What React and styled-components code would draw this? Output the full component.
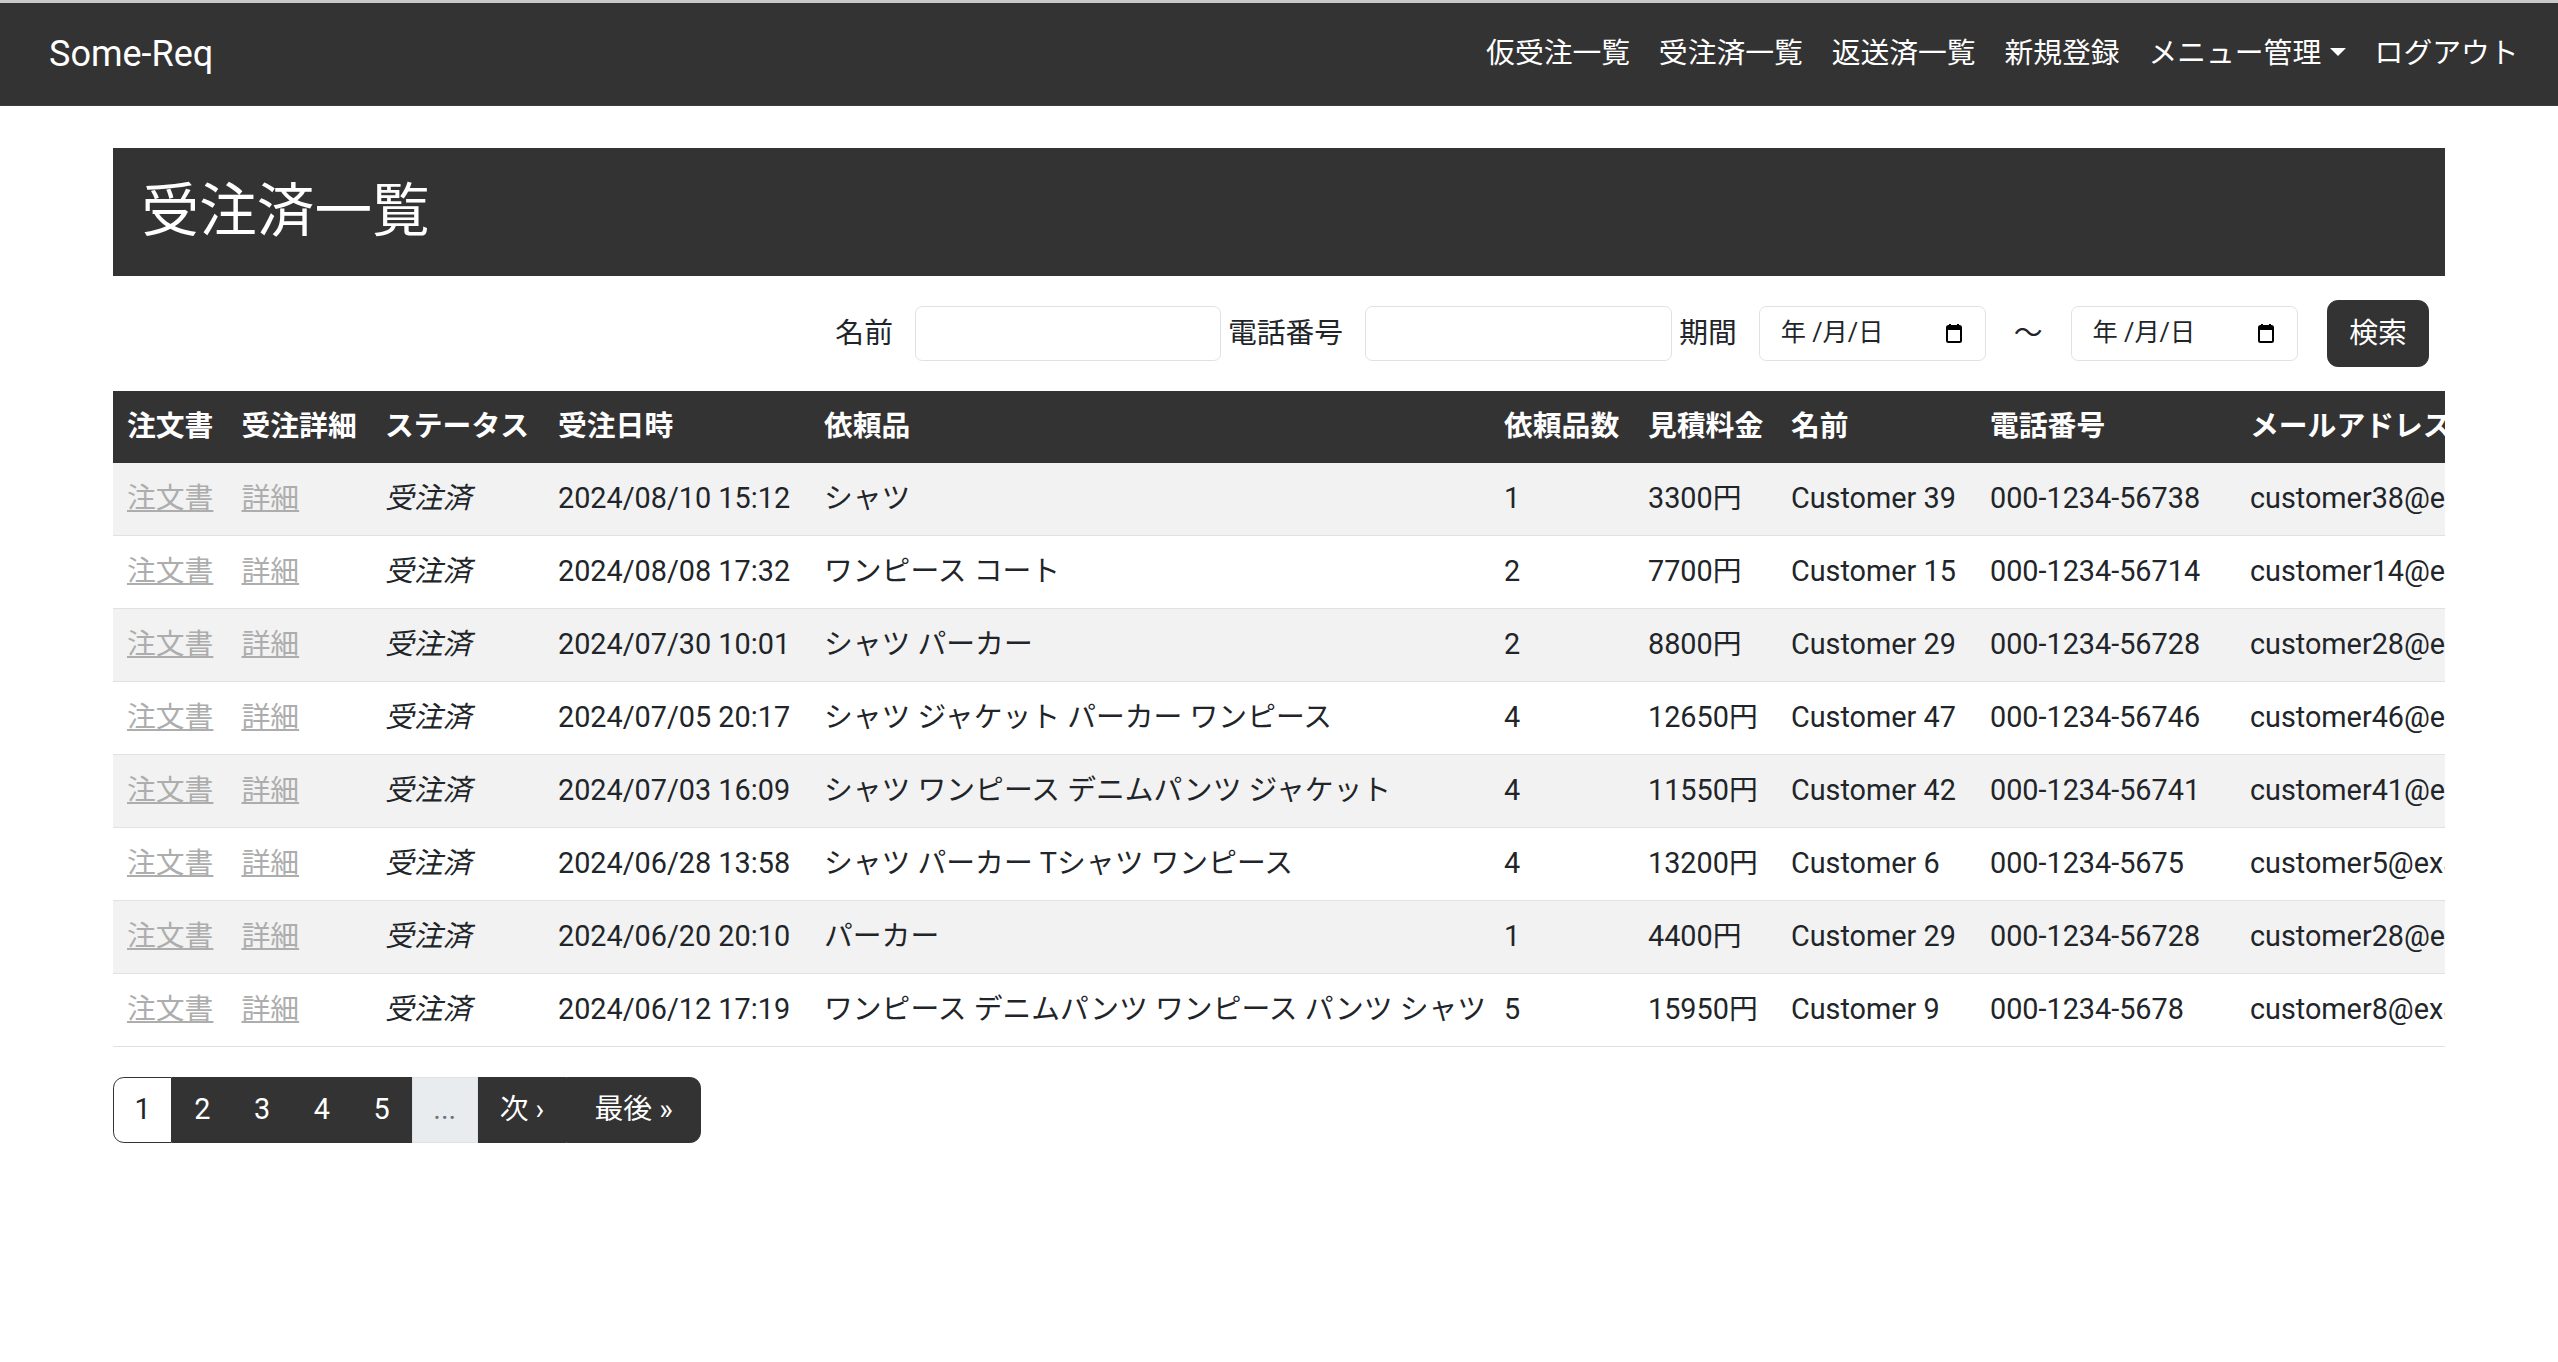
import React from 'react'
import styled, { createGlobalStyle, css } from 'styled-components'

const GlobalStyle = createGlobalStyle`
  body {
    margin: 0;
    background: #fff;
    color: #212529;
    font-family: Roboto, "Noto Sans CJK JP", sans-serif;
    font-size: 28.8px;
    line-height: 1.5;
  }
`

const Navbar = styled.nav`
  display: flex;
  align-items: center;
  justify-content: space-between;
  height: 102px;
  padding: 0 25px 0 49px;
  background: #333;
  border-top: 3px solid #c9c9c9;
  border-bottom: 1px solid #3d3d3d;
`

const Brand = styled.a`
  color: #fff;
  font-size: 36px;
  text-decoration: none;
`

const NavList = styled.ul`
  display: flex;
  margin: 0;
  padding: 0;
  list-style: none;
`

const NavLink = styled.li`
  padding: 0 14.4px;
  color: #fff;
  font-size: 28.8px;

  ${(p) =>
    p.$dropdown &&
    css`
      &::after {
        content: '';
        display: inline-block;
        margin-left: 0.3em;
        vertical-align: 0.25em;
        border-top: 0.3em solid #fff;
        border-left: 0.3em solid transparent;
        border-right: 0.3em solid transparent;
      }
    `}
`

const Container = styled.main`
  width: 2332.8px;
  margin: 0 auto;
`

const PageTitle = styled.h2`
  margin: 42px 0 0;
  padding: 29.4px 29px;
  background: #333;
  color: #fff;
  font-size: 57.6px;
  font-weight: 400;
  line-height: 1.2;
`

const SearchForm = styled.form`
  display: flex;
  justify-content: flex-end;
  align-items: center;
  margin-top: 24px;
  padding-right: 16px;
`

const Label = styled.label`
  flex: none;
  margin: 0 22px 0 7px;
  font-size: 28.8px;
  white-space: nowrap;
`

const TextInput = styled.input`
  flex: none;
  box-sizing: border-box;
  width: ${(p) => p.$width}px;
  height: 55px;
  padding: 7.2px 14.4px;
  border: 1px solid #dee2e6;
  border-radius: 7.2px;
  font: inherit;
  font-size: 25.2px;
  background: #fff;
`

const DateBox = styled.div`
  flex: none;
  box-sizing: border-box;
  display: flex;
  align-items: center;
  justify-content: space-between;
  width: 227px;
  height: 55px;
  padding: 0 22px 0 21px;
  border: 1px solid #dee2e6;
  border-radius: 7.2px;
  font-size: 25.2px;
  color: #212529;
`

const Tilde = styled.span`
  flex: none;
  margin: 0 28px;
  font-size: 28.8px;
`

const SearchButton = styled.button`
  flex: none;
  margin-left: 29px;
  height: 67px;
  padding: 0 21.6px;
  border: 1px solid #333;
  border-radius: 10.8px;
  background: #333;
  color: #fff;
  font: inherit;
  font-size: 28.8px;
`

const TableWrap = styled.div`
  margin-top: 24px;
  overflow: hidden;
`

const Table = styled.table`
  width: 2503px;
  table-layout: fixed;
  border-collapse: collapse;
`

const Th = styled.th`
  padding: 14.4px;
  background: #333;
  color: #fff;
  font-weight: 700;
  text-align: left;
  white-space: nowrap;
  overflow: hidden;
`

const Row = styled.tr`
  background: ${(p) => (p.$striped ? '#f2f2f2' : '#fff')};
`

const Td = styled.td`
  padding: 14.4px;
  border-bottom: 1px solid #dee2e6;
  white-space: nowrap;
  overflow: hidden;
  font-style: ${(p) => (p.$italic ? 'italic' : 'normal')};
`

const MutedLink = styled.a`
  color: #adadad;
  text-decoration: underline;
`

const Pagination = styled.ul`
  display: flex;
  margin: 30px 0 0;
  padding: 0;
  list-style: none;
`

const PageItem = styled.li`
  padding: 10.8px ${(p) => (p.$wide ? 27.5 : 20.8)}px;
  line-height: 43.2px;
  font-size: 28.8px;
  border: 1px solid #333;
  background: #333;
  color: #fff;

  &:first-child {
    border-radius: 10.8px 0 0 10.8px;
  }
  &:last-child {
    border-radius: 0 10.8px 10.8px 0;
  }

  ${(p) =>
    p.$active &&
    css`
      background: #fff;
      color: #212529;
    `}

  ${(p) =>
    p.$disabled &&
    css`
      background: #e9ecef;
      border-color: #dee2e6;
      color: #6c757d;
    `}
`

const CalendarIcon = () => (
  <svg width="18" height="20" viewBox="0 0 18 20">
    <rect x="2" y="3" width="14" height="16" rx="1.5" fill="none" stroke="#000" strokeWidth="2" />
    <rect x="2" y="3" width="14" height="4" fill="#000" />
    <rect x="4" y="1" width="2" height="3" fill="#000" />
    <rect x="12" y="1" width="2" height="3" fill="#000" />
  </svg>
)

const columns = [
  ['注文書', 114.5],
  ['受注詳細', 143.5],
  ['ステータス', 173],
  ['受注日時', 266],
  ['依頼品', 680],
  ['依頼品数', 144],
  ['見積料金', 143],
  ['名前', 199],
  ['電話番号', 260],
  ['メールアドレス', 381],
]

const orders = [
  ['2024/08/10 15:12', 'シャツ', 1, '3300円', 'Customer 39', '000-1234-56738', 'customer38@example.com'],
  ['2024/08/08 17:32', 'ワンピース コート', 2, '7700円', 'Customer 15', '000-1234-56714', 'customer14@example.com'],
  ['2024/07/30 10:01', 'シャツ パーカー', 2, '8800円', 'Customer 29', '000-1234-56728', 'customer28@example.com'],
  ['2024/07/05 20:17', 'シャツ ジャケット パーカー ワンピース', 4, '12650円', 'Customer 47', '000-1234-56746', 'customer46@example.com'],
  ['2024/07/03 16:09', 'シャツ ワンピース デニムパンツ ジャケット', 4, '11550円', 'Customer 42', '000-1234-56741', 'customer41@example.com'],
  ['2024/06/28 13:58', 'シャツ パーカー Tシャツ ワンピース', 4, '13200円', 'Customer 6', '000-1234-5675', 'customer5@example.com'],
  ['2024/06/20 20:10', 'パーカー', 1, '4400円', 'Customer 29', '000-1234-56728', 'customer28@example.com'],
  ['2024/06/12 17:19', 'ワンピース デニムパンツ ワンピース パンツ シャツ', 5, '15950円', 'Customer 9', '000-1234-5678', 'customer8@example.com'],
]

const App = () => (
  <>
    <GlobalStyle />
    <Navbar>
      <Brand href="#">Some-Req</Brand>
      <NavList>
        <NavLink>仮受注一覧</NavLink>
        <NavLink>受注済一覧</NavLink>
        <NavLink>返送済一覧</NavLink>
        <NavLink>新規登録</NavLink>
        <NavLink $dropdown>メニュー管理</NavLink>
        <NavLink>ログアウト</NavLink>
      </NavList>
    </Navbar>

    <Container>
      <PageTitle>受注済一覧</PageTitle>

      <SearchForm onSubmit={(e) => e.preventDefault()}>
        <Label>名前</Label>
        <TextInput $width={306} />
        <Label>電話番号</Label>
        <TextInput $width={307} />
        <Label>期間</Label>
        <DateBox>
          <span>年 /月/日</span>
          <CalendarIcon />
        </DateBox>
        <Tilde>〜</Tilde>
        <DateBox>
          <span>年 /月/日</span>
          <CalendarIcon />
        </DateBox>
        <SearchButton type="submit">検索</SearchButton>
      </SearchForm>

      <TableWrap>
        <Table>
          <colgroup>
            {columns.map(([name, width]) => (
              <col key={name} style={{ width }} />
            ))}
          </colgroup>
          <thead>
            <tr>
              {columns.map(([name]) => (
                <Th key={name}>{name}</Th>
              ))}
            </tr>
          </thead>
          <tbody>
            {orders.map((o, i) => (
              <Row key={i} $striped={i % 2 === 0}>
                <Td>
                  <MutedLink href="#">注文書</MutedLink>
                </Td>
                <Td>
                  <MutedLink href="#">詳細</MutedLink>
                </Td>
                <Td $italic>受注済</Td>
                {o.map((v, j) => (
                  <Td key={j}>{v}</Td>
                ))}
              </Row>
            ))}
          </tbody>
        </Table>
      </TableWrap>

      <Pagination>
        <PageItem $active>1</PageItem>
        <PageItem>2</PageItem>
        <PageItem>3</PageItem>
        <PageItem>4</PageItem>
        <PageItem>5</PageItem>
        <PageItem $disabled>...</PageItem>
        <PageItem>次 ›</PageItem>
        <PageItem $wide>最後 »</PageItem>
      </Pagination>
    </Container>
  </>
)

export default App
